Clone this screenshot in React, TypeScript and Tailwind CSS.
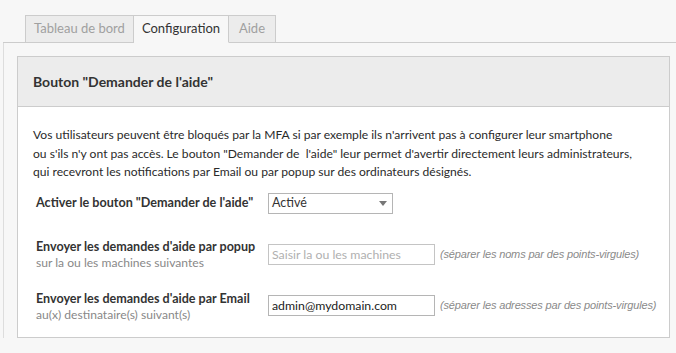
import React from 'react';

const font = { fontFamily: 'Lato, "Open Sans", sans-serif' };

// Tabs along the top of the page
const tabs = [
  { label: 'Tableau de bord', active: false, w: 'w-[109px]' },
  { label: 'Configuration', active: true, w: 'w-[95px]' },
  { label: 'Aide', active: false, w: 'w-[47px]' },
];

const Tabs = () => (
  <div className="ml-[3px] flex border-b border-[#cccccc] pl-[22px]">
    {tabs.map((t, i) => (
      <div
        key={t.label}
        className={
          'flex h-[28px] mb-[-1px] items-center justify-center border border-[#cccccc] text-[13px] ' +
          t.w +
          (i > 0 ? ' border-l-0 ' : ' ') +
          (t.active ? 'bg-[#f7f7f7] border-b-[#f7f7f7] text-[#333333]' : 'bg-[#ececec] text-[#a0a0a0]')
        }
      >
        {t.label}
      </div>
    ))}
  </div>
);

const Hint = ({ children }: { children: React.ReactNode }) => (
  <span
    className="ml-[5px] whitespace-nowrap text-[11px] italic text-[#8a8a8a]"
    style={{ fontFamily: '"Liberation Sans", Arial, sans-serif', letterSpacing: '-0.15px' }}
  >
    {children}
  </span>
);

export default function App() {
  return (
    <div className="h-[353px] w-[676px] overflow-hidden bg-[#f7f7f7] pt-[15px] text-[#333333]" style={font}>
      <Tabs />
      <div className="ml-[3px] border-l border-[#dddddd] pl-[13px] pt-[13px]">
        <div className="w-[653px] border border-[#cccccc] bg-white">
          {/* panel header */}
          <div className="flex h-[50px] items-center border-b border-[#cccccc] bg-[#ececec] px-[15px]">
            <h3 className="whitespace-nowrap text-[14px] font-bold text-[#333333]">Bouton "Demander de l'aide"</h3>
          </div>

          <div className="h-[230px] px-[15px] pt-[19px]">
            <p className="whitespace-nowrap text-[12.1px] leading-[18.5px] text-[#2a2a2a]">
              Vos utilisateurs peuvent être bloqués par la MFA si par exemple ils n'arrivent pas à configurer leur smartphone
              <br />
              ou s'ils n'y ont pas accès. Le bouton "Demander de&nbsp; l'aide" leur permet d'avertir directement leurs administrateurs,
              <br />
              qui recevront les notifications par Email ou par popup sur des ordinateurs désignés.
            </p>

            {/* activation */}
            <div className="mt-[11.5px] flex items-center">
              <label className="w-[235px] shrink-0 whitespace-nowrap pl-[3px] text-[12.6px] font-bold">Activer le bouton "Demander de l'aide"</label>
              <div className="flex h-[21px] w-[125px] shrink-0 items-center justify-between border border-[#b5b5b5] bg-white pl-[3px] pr-[5px] text-[12.5px]">
                <span>Activé</span>
                <svg width="8" height="5" viewBox="0 0 8 5">
                  <path d="M0 0h8L4 5z" fill="#777777" />
                </svg>
              </div>
            </div>

            {/* popup */}
            <div className="mt-[25px] flex items-start">
              <div className="w-[235px] shrink-0 whitespace-nowrap pl-[3px] leading-[16px]">
                <div className="text-[12.55px] font-bold">Envoyer les demandes d'aide par popup</div>
                <div className="text-[12.1px] text-[#888888]">sur la ou les machines suivantes</div>
              </div>
              <div className="mt-[5px] flex shrink-0 items-center">
                <input
                  className="h-[21px] w-[167px] border border-[#c4c4c4] bg-white px-[3px] text-[12.3px] text-[#333333] outline-none placeholder:text-[#b0b0b0]"
                  placeholder="Saisir la ou les machines"
                  style={font}
                />
                <Hint>(séparer les noms par des points-virgules)</Hint>
              </div>
            </div>

            {/* email */}
            <div className="mt-[20px] flex items-start">
              <div className="w-[235px] shrink-0 whitespace-nowrap pl-[3px] leading-[16px]">
                <div className="text-[12.55px] font-bold">Envoyer les demandes d'aide par Email</div>
                <div className="text-[12.1px] text-[#888888]">au(x) destinataire(s) suivant(s)</div>
              </div>
              <div className="mt-[4px] flex shrink-0 items-center">
                <input
                  className="h-[21px] w-[167px] border border-[#b5b5b5] bg-white px-[3px] text-[12.3px] text-[#222222] outline-none"
                  defaultValue="admin@mydomain.com"
                  style={font}
                />
                <Hint>(séparer les adresses par des points-virgules)</Hint>
              </div>
            </div>
          </div>
        </div>
      </div>
    </div>
  );
}
